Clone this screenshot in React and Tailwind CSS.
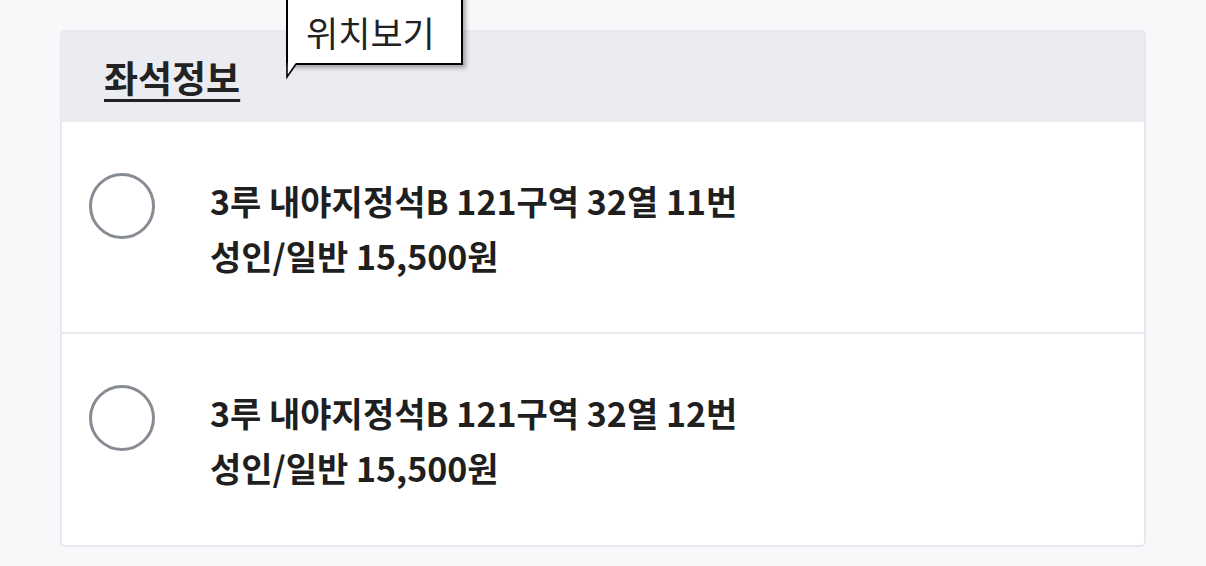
const seats = [
  { id: 1, title: '3루 내야지정석B 121구역 32열 11번', price: '성인/일반 15,500원' },
  { id: 2, title: '3루 내야지정석B 121구역 32열 12번', price: '성인/일반 15,500원' },
]

export default function App() {
  return (
    <div
      className="relative min-h-[566px] overflow-hidden bg-[#f7f8fa] px-[60px] pt-[30px] pb-[19px] text-[#222]"
      style={{ fontFamily: '"Noto Sans CJK KR", "Noto Sans", sans-serif' }}
    >
      <div className="overflow-hidden rounded-[5px] border-2 border-[#e8e9ee] bg-white">
        {/* Header */}
        <div className="flex h-[90px] items-center bg-[#ebecf1] pl-[42px]">
          <h2 className="text-[37px] font-bold leading-none underline decoration-[3px] underline-offset-[6px]">
            좌석정보
          </h2>
        </div>

        {seats.map((seat, i) => (
          <label
            key={seat.id}
            className={`flex items-start gap-[55px] pl-[27px] pt-[51px] ${
              i === 0 ? 'h-[212px] border-b-2 border-[#e8e9ee]' : 'h-[211px]'
            }`}
          >
            <span className="h-[66px] w-[66px] shrink-0 rounded-full border-[3px] border-[#878c94] bg-white" />
            <div className="text-[34px] font-bold leading-[55px] text-[#1f1f1f]">
              <p>{seat.title}</p>
              <p>{seat.price}</p>
            </div>
          </label>
        ))}
      </div>

      {/* Tooltip */}
      <div className="absolute left-[286px] top-[-12px]">
        <div className="flex h-[77px] w-[177px] items-end border-2 border-black bg-white pb-[14px] pl-[18px] shadow-[3px_3px_4px_rgba(0,0,0,0.3)]">
          <span className="text-[35px] font-normal leading-none">위치보기</span>
        </div>
        <svg className="absolute left-0 top-[75px]" width="12" height="16" viewBox="0 0 12 16">
          <polygon points="1,0 1,14 10,0" fill="#fff" />
          <polyline points="1,0 1,14 10,1" fill="none" stroke="#000" strokeWidth="1.6" />
        </svg>
      </div>
    </div>
  )
}
